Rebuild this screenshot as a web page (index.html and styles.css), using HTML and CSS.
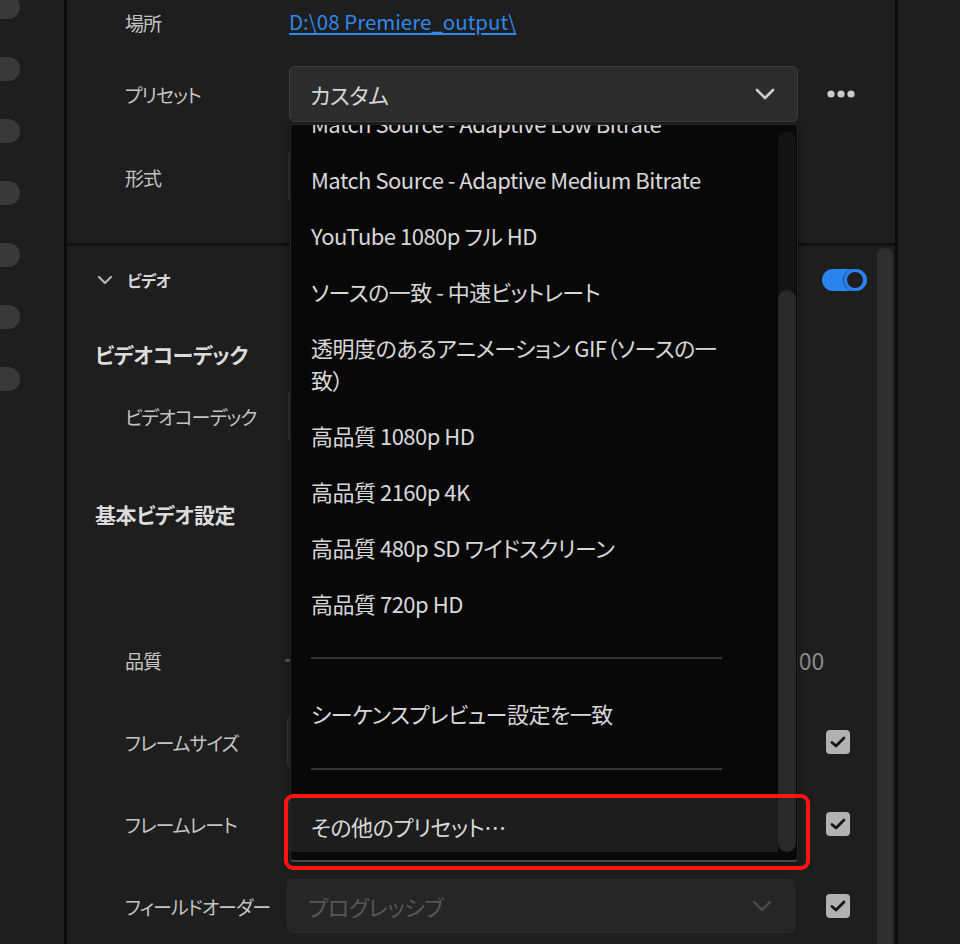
FILE: index.html
```html
<!DOCTYPE html>
<html lang="ja">
<head>
<meta charset="utf-8">
<title>書き出し設定</title>
<link rel="stylesheet" href="styles.css">
</head>
<body>
<div class="app">
  <aside class="rail">
    <span class="pill"></span>
    <span class="pill"></span>
    <span class="pill"></span>
    <span class="pill"></span>
    <span class="pill"></span>
    <span class="pill"></span>
    <span class="pill"></span>
  </aside>
  <div class="vline"></div>
  <main class="panel">
    <section class="general">
      <div class="row row-loc">
        <span class="label">場所</span>
        <a class="path" href="#">D:\08 Premiere_output\</a>
      </div>
      <div class="row row-preset">
        <span class="label">プリセット</span>
        <div class="preset-field">
          <div class="select select-open">
            <span>カスタム</span>
            <svg class="chev" width="20" height="12" viewBox="0 0 20 12"><path d="M2 2 L10 10 L18 2" fill="none" stroke="#cfcfcf" stroke-width="2.6" stroke-linecap="round" stroke-linejoin="round"/></svg>
          </div>
          <div class="menu">
            <div class="menu-list">
              <div class="item">Match Source - Adaptive Low Bitrate</div>
              <div class="item">Match Source - Adaptive Medium Bitrate</div>
              <div class="item">YouTube 1080p フル HD</div>
              <div class="item">ソースの一致 - 中速ビットレート</div>
              <div class="item">透明度のあるアニメーション GIF（ソースの一<br>致）</div>
              <div class="item">高品質 1080p HD</div>
              <div class="item">高品質 2160p 4K</div>
              <div class="item">高品質 480p SD ワイドスクリーン</div>
              <div class="item">高品質 720p HD</div>
              <div class="sep"></div>
              <div class="item">シーケンスプレビュー設定を一致</div>
              <div class="sep sep-b"></div>
              <div class="item item-hover">その他のプリセット…</div>
            </div>
            <div class="menu-scroll"><div class="menu-thumb"></div></div>
          </div>
          <div class="highlight"></div>
        </div>
        <div class="extra extra-dots">
          <svg width="28" height="8" viewBox="0 0 28 8"><circle cx="4" cy="4" r="3.6" fill="#cbcbcb"/><circle cx="14" cy="4" r="3.6" fill="#cbcbcb"/><circle cx="24" cy="4" r="3.6" fill="#cbcbcb"/></svg>
        </div>
      </div>
      <div class="row row-format">
        <span class="label">形式</span>
        <div class="select"></div>
      </div>
    </section>

    <section class="video">
      <div class="video-body">
        <div class="section-head">
          <svg class="head-chev" width="16" height="10" viewBox="0 0 16 10"><path d="M2 2 L8 8 L14 2" fill="none" stroke="#b5b5b5" stroke-width="2.2" stroke-linecap="round" stroke-linejoin="round"/></svg>
          <span class="head-title">ビデオ</span>
          <span class="toggle"><span class="knob"></span></span>
        </div>

        <h2 class="heading heading-codec">ビデオコーデック</h2>
        <div class="row row-codec">
          <span class="label">ビデオコーデック</span>
          <div class="select"></div>
        </div>

        <h2 class="heading heading-basic">基本ビデオ設定</h2>
        <div class="match-row"></div>

        <div class="row row-quality">
          <span class="label">品質</span>
          <div class="slider"><span class="slider-track"></span></div>
          <div class="extra extra-value"><span class="value">100</span></div>
        </div>

        <div class="row row-v">
          <span class="label">フレームサイズ</span>
          <div class="select"></div>
          <div class="extra extra-check">
            <span class="check"><svg width="16" height="12" viewBox="0 0 16 12"><path d="M2 6.5 L6 10 L14 2" fill="none" stroke="#151515" stroke-width="2.8" stroke-linecap="round" stroke-linejoin="round"/></svg></span>
          </div>
        </div>

        <div class="row row-v">
          <span class="label">フレームレート</span>
          <div class="select"></div>
          <div class="extra extra-check">
            <span class="check"><svg width="16" height="12" viewBox="0 0 16 12"><path d="M2 6.5 L6 10 L14 2" fill="none" stroke="#151515" stroke-width="2.8" stroke-linecap="round" stroke-linejoin="round"/></svg></span>
          </div>
        </div>

        <div class="row row-v">
          <span class="label">フィールドオーダー</span>
          <div class="select select-disabled">
            <span>プログレッシブ</span>
            <svg class="chev" width="20" height="12" viewBox="0 0 20 12"><path d="M2 2 L10 10 L18 2" fill="none" stroke="#4d4d4d" stroke-width="2.4" stroke-linecap="round" stroke-linejoin="round"/></svg>
          </div>
          <div class="extra extra-check">
            <span class="check"><svg width="16" height="12" viewBox="0 0 16 12"><path d="M2 6.5 L6 10 L14 2" fill="none" stroke="#151515" stroke-width="2.8" stroke-linecap="round" stroke-linejoin="round"/></svg></span>
          </div>
        </div>
      </div>
      <div class="scrolltrack"></div>
    </section>
  </main>
  <div class="vline vline-r"></div>
  <div class="rightpane"></div>
</div>
</body>
</html>
```

FILE: styles.css
```css
* { box-sizing: border-box; }

html, body {
  margin: 0;
  padding: 0;
  height: 944px;
  overflow: hidden;
  background: #1e1e1e;
}

body {
  font-family: "Noto Sans CJK JP", "Noto Sans", sans-serif;
  font-feature-settings: "palt";
  color: #c8c8c8;
}

.app {
  display: flex;
  height: 944px;
}

/* left rail */
.rail {
  width: 64px;
  flex: none;
  display: flex;
  flex-direction: column;
  gap: 38px;
  overflow: hidden;
}
.pill {
  display: block;
  width: 40px;
  height: 24px;
  margin-left: -20px;
  border-radius: 12px;
  background: #393939;
  flex: none;
}
.pill:first-child { margin-top: -5px; }

.vline {
  width: 3px;
  flex: none;
  background: #0c0c0c;
}

.panel {
  width: 828px;
  flex: none;
  display: flex;
  flex-direction: column;
}

.rightpane {
  flex: 1;
  background: #1e1e1e;
}

/* generic rows */
.row {
  display: grid;
  grid-template-columns: 163px 510px 1fr;
  align-items: center;
  padding-left: 58px;
}
.label {
  font-size: 19px;
  letter-spacing: -1px;
  color: #c4c4c4;
  white-space: nowrap;
}

.select {
  height: 100%;
  display: flex;
  align-items: center;
  justify-content: space-between;
  padding: 0 20px 0 20px;
  background: #2a2a2a;
  border: 1px solid #383838;
  border-radius: 6px;
  font-size: 22px;
  letter-spacing: -0.4px;
  color: #d6d6d6;
}
.chev { flex: none; margin-right: 2px; }

/* general section */
.general {
  padding-bottom: 39px;
  border-bottom: 3px solid #111111;
}
.row-loc { height: 44px; margin-bottom: 22px; }
.row-preset { height: 56px; margin-bottom: 28px; }
.row-format { height: 54px; }

.path {
  font-size: 20.5px;
  color: #2f88ea;
  text-decoration: underline;
  text-underline-offset: 3px;
  text-decoration-thickness: 1.5px;
  white-space: nowrap;
  justify-self: start;
  margin-left: 1px;
  margin-top: -2px;
}

.preset-field {
  position: relative;
  z-index: 10;
  height: 56px;
  margin-left: 1px;
}
.select-open {
  background: #2c2c2c;
  border-color: #3e3e3e;
}

.extra-dots {
  padding-left: 29px;
  display: flex;
  align-items: center;
}
.extra-dots svg { display: block; }

/* dropdown menu */
.menu {
  position: absolute;
  top: 58px;
  left: 1px;
  width: 508px;
  height: 738px;
  background: #080808;
  border: 1px solid #262626;
  border-bottom: 2px solid #4a4a4a;
  border-radius: 4px;
  display: flex;
  overflow: hidden;
  box-shadow: 0 2px 6px rgba(0,0,0,0.5);
}
.menu-list {
  flex: 1;
  margin-top: -30px;
}
.item {
  padding: 12px 56px 12px 20px;
  font-size: 22px;
  letter-spacing: -0.5px;
  line-height: 32px;
  color: #d8d8d8;
  white-space: nowrap;
}
.item-hover {
  background: #1d1d1d;
  padding-top: 14px;
  padding-bottom: 10px;
}
.sep {
  height: 2px;
  margin: 26px 56px 26px 20px;
  background: #363636;
}
.sep-b { margin-top: 27px; margin-bottom: 26px; }

.menu-scroll {
  width: 18px;
  flex: none;
  margin: 6px 1px 8px 0;
  border-radius: 9px;
  background: #131313;
  display: flex;
  flex-direction: column;
}
.menu-thumb {
  margin-top: 159px;
  flex: 1;
  border-radius: 9px;
  background: #292929;
}

.highlight {
  position: absolute;
  left: -5px;
  top: 728px;
  width: 526px;
  height: 76px;
  border: 4px solid #ff1414;
  border-radius: 9px;
  pointer-events: none;
}

/* video section */
.video {
  flex: 1;
  display: flex;
  min-height: 0;
}
.video-body {
  flex: 1;
  padding-top: 14px;
}
.scrolltrack {
  width: 16px;
  flex: none;
  margin: 2px 2px 0 0;
  border-radius: 8px 8px 0 0;
  background: #2f2f2f;
}

.section-head {
  height: 40px;
  display: flex;
  align-items: center;
  padding-left: 30px;
  padding-right: 10px;
}
.head-chev { display: block; flex: none; }
.head-title {
  margin-left: 14px;
  font-size: 16px;
  letter-spacing: -0.5px;
  font-weight: 700;
  color: #d6d6d6;
  flex: 1;
}
.toggle {
  width: 45px;
  height: 22px;
  border-radius: 11px;
  background: #2a84ee;
  display: flex;
  justify-content: flex-end;
  align-items: center;
  padding-right: 1px;
}
.knob {
  width: 22px;
  height: 22px;
  border-radius: 50%;
  background: #1f1f1f;
  border: 3px solid #2a84ee;
  box-shadow: -1px 0 0 #1a4f8f;
}

.heading {
  margin: 0;
  padding-left: 28px;
  height: 36px;
  line-height: 36px;
  font-size: 21px;
  letter-spacing: -0.4px;
  font-weight: 700;
  color: #dcdcdc;
}
.heading-codec { margin-top: 36px; }
.row-codec { height: 54px; margin-top: 17px; }
.heading-basic { margin-top: 53px; }

.match-row { height: 101px; }

.row-quality { height: 54px; }
.slider {
  height: 100%;
  display: flex;
  align-items: center;
  margin-left: -3px;
}
.slider-track {
  display: block;
  width: 480px;
  height: 3px;
  background: #5a5a5a;
  border-radius: 2px;
}
.extra-value { margin-left: -12px; }
.value {
  font-size: 23px;
  color: #8c8c8c;
}

.row-v { height: 54px; margin-top: 28px; }
.row-v .select { margin-left: -1px; width: 508px; }
.select-disabled {
  background: #262626;
  border-color: #2b2b2b;
  color: #575757;
}

.extra-check {
  padding-left: 28px;
  display: flex;
  align-items: center;
}
.check {
  width: 24px;
  height: 24px;
  border-radius: 4px;
  background: #b2b2b2;
  display: flex;
  align-items: center;
  justify-content: center;
}
.check svg { display: block; }
```
